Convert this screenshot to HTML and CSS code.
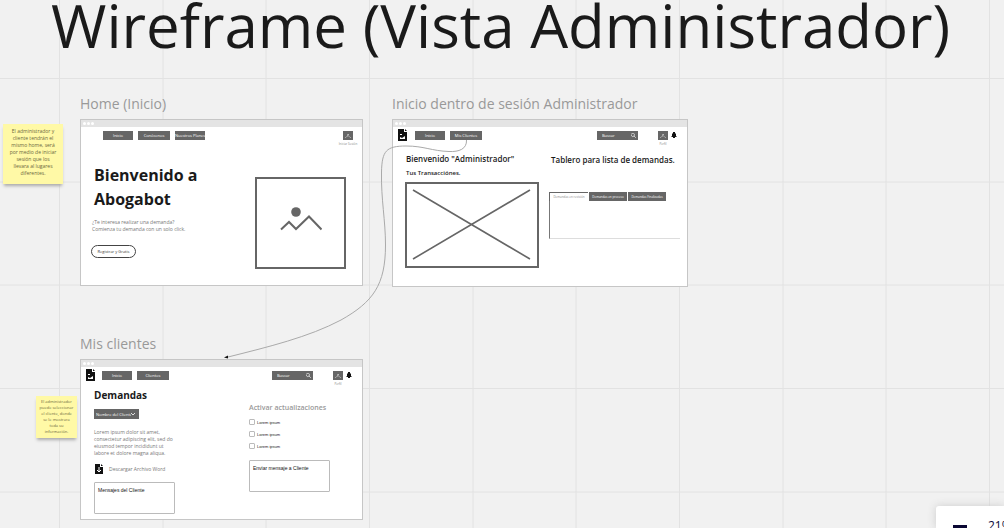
FILE: index.html
```html
<!DOCTYPE html>
<html lang="es">
<head>
<meta charset="utf-8">
<title>Wireframe (Vista Administrador)</title>
<link rel="stylesheet" href="styles.css">
</head>
<body>
<svg class="defs" aria-hidden="true">
  <symbol id="file-image" viewBox="0 0 9 12"><path fill="#111" d="M0 0h6v3h3v9H0z"/><path fill="#111" d="M7 0l2 2H7z"/><path fill="#fff" d="M2 5h2v1H2zM2 10V8l2 1 3-2v3z"/></symbol>
  <symbol id="bell" viewBox="0 0 6 6"><path fill="#111" d="M2 0h2v1l1 1v2l1 1H4v1H2V5H0l1-1V2l1-1z"/></symbol>
  <symbol id="search" viewBox="0 0 6 6"><path fill="none" stroke="#fff" stroke-width=".8" d="M3.6 3.6A2 2 0 1 1 4 1.4a2 2 0 0 1-.4 2.2L5.8 5.8"/></symbol>
  <symbol id="user" viewBox="0 0 10 9"><path fill="none" stroke="#fff" stroke-width=".8" stroke-dasharray="1.2 .7" d="M2.500 6.500L5 4.500l2.500 2M4.500 3.500h1.500"/></symbol>
</svg>
<main class="board">
  <svg class="grid" aria-hidden="true">
    <defs><pattern id="lines" width="310" height="310" patternUnits="userSpaceOnUse"><path d="M59.500 0v310M163 0v310M266 0v310M0 78.500h310M0 182h310M0 285h310" fill="none" stroke="#e2e2e2"/></pattern></defs>
    <rect width="100%" height="100%" fill="url(#lines)"/>
  </svg>

  <h1 class="title">Wireframe (Vista Administrador)</h1>

  <aside class="sticky sticky-home">El administrador y<br>cliente tendrán el<br>mismo home, será<br>por medio de iniciar<br>sesión que los<br>llevara al lugares<br>diferentes.</aside>
  <aside class="sticky sticky-clients">El administrador<br>puede seleccionar<br>el cliente, donde<br>se le mostrara<br>toda su<br>información.</aside>

  <section class="node node-home">
    <h2 class="label">Home (Inicio)</h2>
    <div class="frame">
      <div class="bar"><i></i><i></i><i></i></div>
      <nav class="nav nav-home">
        <button class="btn">Inicio</button>
        <button class="btn wide">Conócenos</button>
        <button class="btn">Nuestros Planes</button>
        <span class="push"></span>
        <span class="account"><button class="avatar" aria-label="Iniciar Sesión"><svg><use href="#user"/></svg></button><small>Iniciar Sesión</small></span>
      </nav>
      <div class="hero">
        <div>
          <h3 class="hero-title">Bienvenido a Abogabot</h3>
          <p class="copy">¿Te interesa realizar una demanda?<br>Comienza tu demanda con un solo click.</p>
          <button class="pill">Registrar y Gratis</button>
        </div>
        <div class="picture"><svg viewBox="0 0 42 32"><circle cx="16" cy="5" r="4.800" fill="#666"/><path d="M1 22.500l8-7.500 7 7 13-12.500 12.500 13" fill="none" stroke="#666" stroke-width="2"/></svg></div>
      </div>
    </div>
  </section>

  <section class="node node-admin">
    <h2 class="label">Inicio dentro de sesión Administrador</h2>
    <div class="frame">
      <div class="bar"><i></i><i></i><i></i></div>
      <nav class="nav">
        <svg class="logo"><use href="#file-image"/></svg>
        <button class="btn">Inicio</button>
        <button class="btn wide">Mis Clientes</button>
        <span class="push"></span>
        <label class="search"><input aria-label="Buscar" value="Buscar"><svg><use href="#search"/></svg></label>
        <span class="account"><button class="avatar" aria-label="Perfil"><svg><use href="#user"/></svg></button><small>Perfil</small></span>
        <svg class="bell"><use href="#bell"/></svg>
      </nav>
      <div class="admin">
        <div class="admin-left">
          <h3 class="welcome">Bienvenido "Administrador"</h3>
          <h4 class="sub">Tus Transacciónes.</h4>
          <div class="placeholder"><svg viewBox="0 0 130 82" preserveAspectRatio="none"><path d="M6 6l117 69M123 6L6 75" stroke="#666" stroke-width="1.600"/></svg></div>
        </div>
        <div class="admin-right">
          <h3 class="list-title">Tablero para lista de demandas.</h3>
          <div class="tabs"><button class="tab active">Demandas en revisión</button><button class="tab">Demandas en proceso</button><button class="tab">Demandas Finalizadas</button></div>
          <div class="panel"></div>
        </div>
      </div>
    </div>
  </section>

  <section class="node node-clients">
    <h2 class="label">Mis clientes</h2>
    <div class="frame">
      <div class="bar"><i></i><i></i><i></i></div>
      <nav class="nav nav-clients">
        <svg class="logo"><use href="#file-image"/></svg>
        <button class="btn">Inicio</button>
        <button class="btn wide">Clientes</button>
        <span class="push"></span>
        <label class="search"><input aria-label="Buscar cliente" value="Buscar"><svg><use href="#search"/></svg></label>
        <span class="account"><button class="avatar" aria-label="Perfil"><svg><use href="#user"/></svg></button><small>Perfil</small></span>
        <svg class="bell"><use href="#bell"/></svg>
      </nav>
      <div class="clients">
        <div class="demands">
          <h3 class="demands-title">Demandas</h3>
          <span class="select"><select aria-label="Nombre del cliente"><option>Nombre del Cliente</option></select><svg viewBox="0 0 4 4"><path d="M0 1l2 2 2-2" fill="none" stroke="#fff" stroke-width=".8"/></svg></span>
          <p class="copy lorem">Lorem ipsum dolor sit amet, consectetur adipiscing elit, sed do eiusmod tempor incididunt ut labore et dolore magna aliqua.</p>
          <a class="download" href="#word"><svg viewBox="0 0 8 10"><path fill="#111" d="M0 0h5v3h3v7H0zM6 0l2 2H6z"/><path d="M4 3v5M2 6l2 2 2-2" fill="none" stroke="#fff"/></svg>Descargar Archivo Word</a>
          <textarea class="message" aria-label="Mensajes">Mensajes del Cliente</textarea>
        </div>
        <div class="updates">
          <h3 class="updates-title">Activar actualizaciones</h3>
          <label class="check"><input type="checkbox">Lorem ipsum</label>
          <label class="check"><input type="checkbox">Lorem ipsum</label>
          <label class="check"><input type="checkbox">Lorem ipsum</label>
          <textarea class="message" aria-label="Enviar mensaje">Enviar mensaje a Cliente</textarea>
        </div>
      </div>
    </div>
  </section>

  <svg class="connector" viewBox="0 0 1004 528" aria-hidden="true"><path d="M466.500 140C467 149 459 152 449 151.500C432 151 424 146 406 146C386 146 382 151 381.500 172C381 200 385.500 220 385.500 245C385.500 285 373 302 341 320C309 337 268 347 228 357" fill="none" stroke="#aaa"/><path d="M224 357.500l4-2v3z" fill="#111"/></svg>

  <div class="zoom"><button class="minus" aria-label="Alejar"></button><span>21%</span></div>
</main>
</body>
</html>
```
FILE: styles.css
```css
* { box-sizing: border-box; }
body { margin: 0; font-family: "Open Sans", sans-serif; color: #1a1a1a; }
h1, h2, h3, h4, p { margin: 0; }
button, input, select, textarea { font-family: inherit; border: 0; border-radius: 0; padding: 0; margin: 0; }
svg { display: block; }
.defs { position: absolute; width: 0; height: 0; }

.board { position: relative; height: 100vh; overflow: hidden; background: #f1f1f1; }
.grid { position: absolute; width: 100%; height: 100%; }
.title { position: absolute; left: 51px; top: 0; font-size: 60px; line-height: 50px; font-weight: 400; white-space: nowrap; text-rendering: geometricPrecision; }

.node { position: absolute; }
.node-home { left: 80px; top: 94px; width: 283px; }
.node-admin { left: 392px; top: 94px; width: 296px; }
.node-clients { left: 80px; top: 334px; width: 283px; }
.label { font-size: 14px; line-height: 20px; font-weight: 400; color: #999; margin-bottom: 5px; white-space: nowrap; }
.frame { background: #fff; border: 1px solid #c6c6c6; }
.bar { display: flex; gap: 1px; height: 7px; padding: 2px; background: #e4e4e4; }
.bar i { width: 3px; height: 3px; border-radius: 50%; background: #fff; }

.nav { display: flex; align-items: flex-start; height: 28px; padding: 4px 10px 0 5px; }
.nav-home { padding: 4px 9px 0 22px; }
.btn { width: 30px; height: 9px; margin-right: 5px; background: #666; color: #fff; font-size: 4px; line-height: 9px; text-align: center; white-space: nowrap; }
.btn.wide { width: 32px; }
.push { flex: 1; }
.logo { width: 9px; height: 12px; margin: -2px 8px 0 0; }
.account { display: flex; flex-direction: column; align-items: center; width: 10px; }
.avatar { width: 10px; height: 9px; background: #666; }
.avatar svg { width: 10px; height: 9px; }
.account small { font-size: 3px; line-height: 9px; color: #888; white-space: nowrap; }
.bell { width: 6px; height: 6px; margin: 1px 0 0 3px; }
.search { display: flex; align-items: center; width: 41px; height: 9px; margin-right: 20px; padding: 0 2px 0 5px; background: #666; }
.search input { flex: 1; min-width: 0; height: 9px; background: none; color: #fff; font-size: 4px; }
.search svg { width: 5px; height: 5px; }

.hero { display: flex; justify-content: space-between; padding: 8px 16px 16px 10px; }
.hero-title { width: 120px; padding-left: 3px; font-size: 16px; line-height: 24px; font-weight: 700; }
.copy { font-size: 5px; line-height: 7px; color: #777; }
.hero .copy { margin: 8px 0 12px 1px; }
.pill { display: block; width: 45px; height: 13px; border: 1px solid #444; border-radius: 7px; background: #fff; color: #333; font-size: 4px; line-height: 10px; }
.picture { display: flex; align-items: center; justify-content: center; width: 91px; height: 92px; margin-top: 14px; border: 2px solid #666; }
.picture svg { width: 42px; height: 32px; }

.admin { display: flex; justify-content: space-between; padding: 0 7px 18px 12px; }
.admin-left { width: 134px; }
.welcome { padding-left: 1px; font-size: 8px; line-height: 8px; font-weight: 600; white-space: nowrap; }
.sub { padding: 6px 0 5px 1px; font-size: 6px; line-height: 8px; font-weight: 600; }
.placeholder { height: 86px; border: 2px solid #666; }
.placeholder svg { width: 100%; height: 100%; }
.admin-right { width: 131px; }
.list-title { padding-left: 2px; font-size: 8px; line-height: 10px; font-weight: 600; white-space: nowrap; }
.tabs { display: flex; gap: 1px; margin-top: 27px; }
.tab { width: 38px; height: 9px; background: #666; color: #fff; font-size: 3px; line-height: 8px; text-align: center; white-space: nowrap; }
.tab.active { width: 39px; border-top: 1px solid #666; border-left: 1px solid #666; background: #fff; color: #888; }
.panel { height: 38px; border-left: 1px solid #777; border-bottom: 1px solid #ddd; }

.clients { display: flex; justify-content: space-between; padding: 0 32px 5px 12px; }
.nav-clients { height: 22px; }
.nav-clients .logo { margin-right: 7px; }
.demands { width: 82px; padding-left: 1px; }
.demands-title { font-size: 10px; line-height: 12px; font-weight: 700; }
.select { display: flex; align-items: center; width: 45px; height: 10px; margin: 8px 0 10px; padding-right: 4px; background: #666; }
.select select { flex: 1; min-width: 0; height: 10px; padding-left: 2px; appearance: none; background: none; color: #fff; font-size: 4px; }
.select svg { width: 4px; height: 4px; }
.lorem { width: 82px; }
.download { display: flex; align-items: center; gap: 6px; margin: 7px 0 8px 1px; color: #777; font-size: 5px; line-height: 10px; text-decoration: none; white-space: nowrap; }
.download svg { width: 8px; height: 10px; }
.message { display: block; width: 81px; height: 32px; padding: 4px 3px; border: 1px solid #bbb; border-radius: 1px; font-family: "Liberation Sans", sans-serif; font-size: 5px; line-height: 6px; color: #111; resize: none; overflow: hidden; }
.updates { padding-top: 15px; }
.updates-title { margin-bottom: 4px; font-size: 7px; line-height: 8px; font-weight: 600; color: #999; white-space: nowrap; }
.check { display: flex; align-items: center; gap: 2px; height: 12px; font-family: "Liberation Sans", sans-serif; font-size: 4px; }
.check input { appearance: none; width: 6px; height: 6px; border: 1px solid #bbb; border-radius: 1px; background: #fff; }
.updates .message { margin-top: 8px; }

.sticky { position: absolute; background: #fff9a6; color: #6b6840; text-align: center; white-space: nowrap; box-shadow: 0 3px 3px -1px #aaa; }
.sticky-home { left: 3px; top: 124px; width: 60px; height: 60px; padding: 4px; font-size: 5px; line-height: 7px; }
.sticky-clients { left: 36px; top: 396px; width: 41px; height: 42px; padding: 3px 2px; font-size: 4px; line-height: 6px; }

.connector { position: absolute; left: 0; top: 0; width: 1004px; height: 528px; pointer-events: none; }
.zoom { position: absolute; right: 0; bottom: 0; display: flex; gap: 21px; width: 68px; height: 22px; padding: 12px 0 0 17px; overflow: hidden; border-radius: 3px 0 0 0; background: #fff; box-shadow: 0 0 8px #ccc; color: #0b0b3b; font-size: 12px; line-height: 16px; }
.minus { flex: none; width: 14px; height: 3px; margin-top: 7px; background: #0a0733; }
```
